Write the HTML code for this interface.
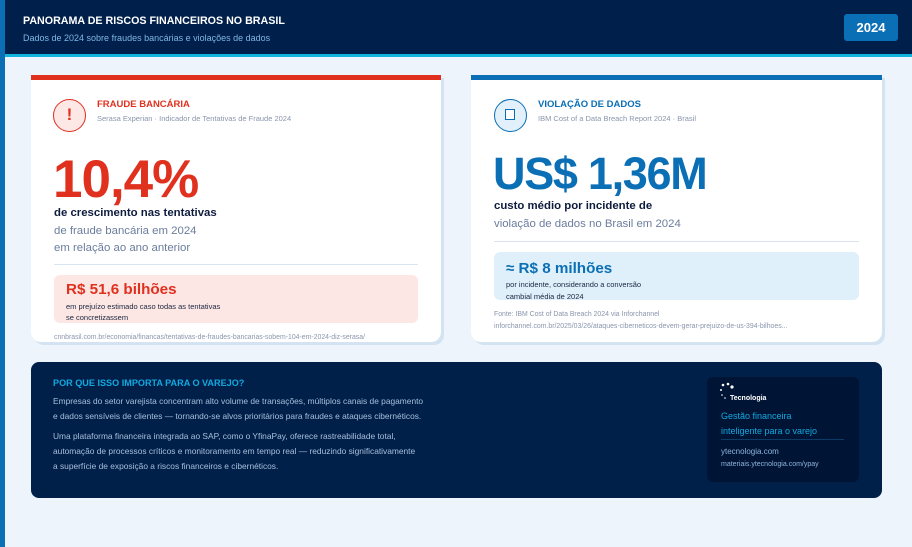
<!DOCTYPE html>
<html><head><meta charset="utf-8"><style>
*{margin:0;padding:0;box-sizing:border-box}
body{width:912px;height:547px;overflow:hidden;background:#eef4fb;font-family:"Liberation Sans",sans-serif;position:relative}
.abs{position:absolute;white-space:nowrap}
.stripe{position:absolute;left:0;top:0;width:5px;height:547px;background:#0a6fb5}
.hdr{position:absolute;left:0;top:0;width:912px;height:54px;background:#001f4b}
.cyan{position:absolute;left:0;top:54px;width:912px;height:3px;background:#12b3dc}
.card{position:absolute;top:75px;height:267px;background:#fff;border-radius:0 0 10px 10px;box-shadow:3px 3px 0 #d3e3f1}
.bar{position:absolute;left:0;top:0;right:0;height:5px}
.bottom{position:absolute;left:31px;top:362px;width:851px;height:136px;background:#00204a;border-radius:8px}
.inner{position:absolute;left:707px;top:377px;width:152px;height:105px;background:#001535;border-radius:6px}
</style></head><body>
<div class="hdr"></div><div class="cyan"></div><div class="stripe"></div>
<div class="abs" style="left:23px;top:15px;color:#fff;font-weight:bold;font-size:10.7px">PANORAMA DE RISCOS FINANCEIROS NO BRASIL</div>
<div class="abs" style="left:23px;top:33px;color:#7fb7e6;font-size:9px">Dados de 2024 sobre fraudes bancárias e violações de dados</div>
<div class="abs" style="left:844px;top:14px;width:54px;height:27px;background:#0a6fb5;border-radius:3px;color:#fff;font-weight:bold;font-size:13px;text-align:center;line-height:27px">2024</div>

<div class="card" style="left:31px;width:410px"><div class="bar" style="background:#e0301e"></div></div>
<div class="abs" style="left:53px;top:99px;width:33px;height:33px;border-radius:50%;border:1.5px solid #e0301e;background:#fde8e6;color:#e0301e;font-weight:bold;font-size:17px;text-align:center;line-height:30px">!</div>
<div class="abs" style="left:97px;top:99px;color:#e0301e;font-weight:bold;font-size:9.5px">FRAUDE BANCÁRIA</div>
<div class="abs" style="left:97px;top:114px;color:#8a96ad;font-size:7.5px">Serasa Experian · Indicador de Tentativas de Fraude 2024</div>
<div class="abs" style="left:53px;top:150px;color:#e0301e;font-weight:bold;font-size:53px;letter-spacing:-1px;line-height:60px">10,4%</div>
<div class="abs" style="left:54px;top:207px;color:#0d1b3d;font-weight:bold;font-size:11.4px">de crescimento nas tentativas</div>
<div class="abs" style="left:54px;top:225px;color:#6b7d9c;font-size:11.4px">de fraude bancária em 2024</div>
<div class="abs" style="left:54px;top:242px;color:#6b7d9c;font-size:11.4px">em relação ao ano anterior</div>
<div class="abs" style="left:54px;top:264px;width:364px;height:1px;background:#d8e4ef"></div>
<div class="abs" style="left:54px;top:275px;width:364px;height:48px;background:#fde7e4;border-radius:6px"></div>
<div class="abs" style="left:66px;top:281px;color:#e0301e;font-weight:bold;font-size:15.2px">R$ 51,6 bilhões</div>
<div class="abs" style="left:66px;top:301px;color:#1a2540;font-size:7.5px;line-height:11px">em prejuízo estimado caso todas as tentativas<br>se concretizassem</div>
<div class="abs" style="left:54px;top:334px;color:#8a96ad;font-size:6.9px">cnnbrasil.com.br/economia/financas/tentativas-de-fraudes-bancarias-sobem-104-em-2024-diz-serasa/</div>

<div class="card" style="left:471px;width:411px"><div class="bar" style="background:#0a6fb5"></div></div>
<div class="abs" style="left:494px;top:99px;width:33px;height:33px;border-radius:50%;border:1.5px solid #0a6fb5;background:#e1f0fa"></div>
<div class="abs" style="left:505px;top:109px;width:10px;height:11px;border:1.2px solid #0a6fb5;background:#fff"></div>
<div class="abs" style="left:538px;top:99px;color:#0a6fb5;font-weight:bold;font-size:9.5px">VIOLAÇÃO DE DADOS</div>
<div class="abs" style="left:538px;top:114px;color:#8a96ad;font-size:7.5px">IBM Cost of a Data Breach Report 2024 · Brasil</div>
<div class="abs" style="left:493px;top:146px;color:#0a6fb5;font-weight:bold;font-size:45px;letter-spacing:-1.3px;line-height:56px">US$ 1,36M</div>
<div class="abs" style="left:494px;top:200px;color:#0d1b3d;font-weight:bold;font-size:11.4px">custo médio por incidente de</div>
<div class="abs" style="left:494px;top:218px;color:#6b7d9c;font-size:11.4px">violação de dados no Brasil em 2024</div>
<div class="abs" style="left:494px;top:241px;width:365px;height:1px;background:#d8e4ef"></div>
<div class="abs" style="left:494px;top:252px;width:365px;height:48px;background:#e0f0fa;border-radius:6px"></div>
<div class="abs" style="left:506px;top:260px;color:#0a6fb5;font-weight:bold;font-size:15.2px">≈ R$ 8 milhões</div>
<div class="abs" style="left:506px;top:279px;color:#1a2540;font-size:7.5px;line-height:11.5px">por incidente, considerando a conversão<br>cambial média de 2024</div>
<div class="abs" style="left:494px;top:309px;color:#8a96ad;font-size:6.9px;line-height:12px">Fonte: IBM Cost of Data Breach 2024 via Inforchannel<br>inforchannel.com.br/2025/03/26/ataques-ciberneticos-devem-gerar-prejuizo-de-us-394-bilhoes...</div>

<div class="bottom"></div>
<div class="abs" style="left:53px;top:378px;color:#12a9e0;font-weight:bold;font-size:9.1px">POR QUE ISSO IMPORTA PARA O VAREJO?</div>
<div class="abs" style="left:53px;top:394px;color:#a9bfdc;font-size:8.4px;line-height:15px">Empresas do setor varejista concentram alto volume de transações, múltiplos canais de pagamento<br>e dados sensíveis de clientes — tornando-se alvos prioritários para fraudes e ataques cibernéticos.</div>
<div class="abs" style="left:53px;top:429px;color:#a9bfdc;font-size:8.4px;line-height:15px">Uma plataforma financeira integrada ao SAP, como o YfinaPay, oferece rastreabilidade total,<br>automação de processos críticos e monitoramento em tempo real — reduzindo significativamente<br>a superfície de exposição a riscos financeiros e cibernéticos.</div>
<div class="inner"></div>
<svg class="abs" style="left:719px;top:382px" width="16" height="18"><circle cx="4" cy="3" r="1.3" fill="#fff"/><circle cx="9" cy="2" r="1.3" fill="#fff"/><circle cx="13" cy="5" r="1.6" fill="#fff"/><circle cx="2" cy="8" r="1" fill="#fff"/><circle cx="3" cy="13" r="0.8" fill="#fff"/><circle cx="6" cy="16" r="0.8" fill="#fff"/></svg>
<div class="abs" style="left:730px;top:395px;color:#fff;font-weight:bold;font-size:7px">Tecnologia</div>
<div class="abs" style="left:721px;top:409px;color:#12a9e0;font-size:9px;line-height:14.5px">Gestão financeira<br>inteligente para o varejo</div>
<div class="abs" style="left:721px;top:439px;width:123px;height:1px;background:#0e3a66"></div>
<div class="abs" style="left:721px;top:447px;color:#8fb3dc;font-size:8px">ytecnologia.com</div>
<div class="abs" style="left:721px;top:461px;color:#8fb3dc;font-size:7px">materiais.ytecnologia.com/ypay</div>
</body></html>
